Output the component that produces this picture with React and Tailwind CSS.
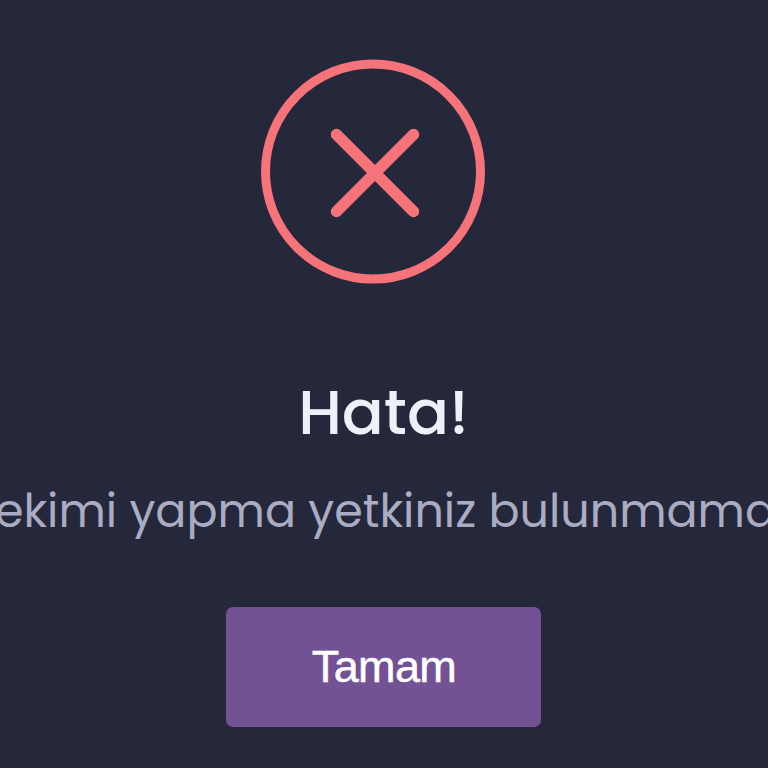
export default function App() {
  return (
    <div className="h-screen w-full overflow-hidden bg-[#25283a] flex flex-col items-center font-['Poppins','Lato',sans-serif]">
      <svg className="mt-[57px] mr-[23px] h-[228px] w-[228px] shrink-0" viewBox="0 0 228 228" fill="none" stroke="#f67479" role="img" aria-label="Hata">
        <circle cx="114" cy="114.5" r="107.5" strokeWidth="9" />
        <path d="M77.5 77.5L154.5 154.5M154.5 77.5L77.5 154.5" strokeWidth="11.5" strokeLinecap="round" />
      </svg>
      <h2 className="mt-[84px] mr-px h-[88px] text-[62px] leading-[88px] font-medium text-[#f0f0fb]">Hata!</h2>
      <p className="mt-[18px] ml-[3px] h-[72px] whitespace-nowrap text-[46px] leading-[72px] text-[#a9acc2]">
        ekimi yapma yetkiniz bulunmama
      </p>
      <button className="mt-[60px] mr-[2px] h-[120px] w-[315px] shrink-0 rounded-[7px] bg-[#725194] pl-[2px] font-['Liberation_Sans',sans-serif] text-[45px] tracking-[-0.6px] text-white [-webkit-text-stroke:0.5px_white]">
        Tamam
      </button>
    </div>
  );
}
